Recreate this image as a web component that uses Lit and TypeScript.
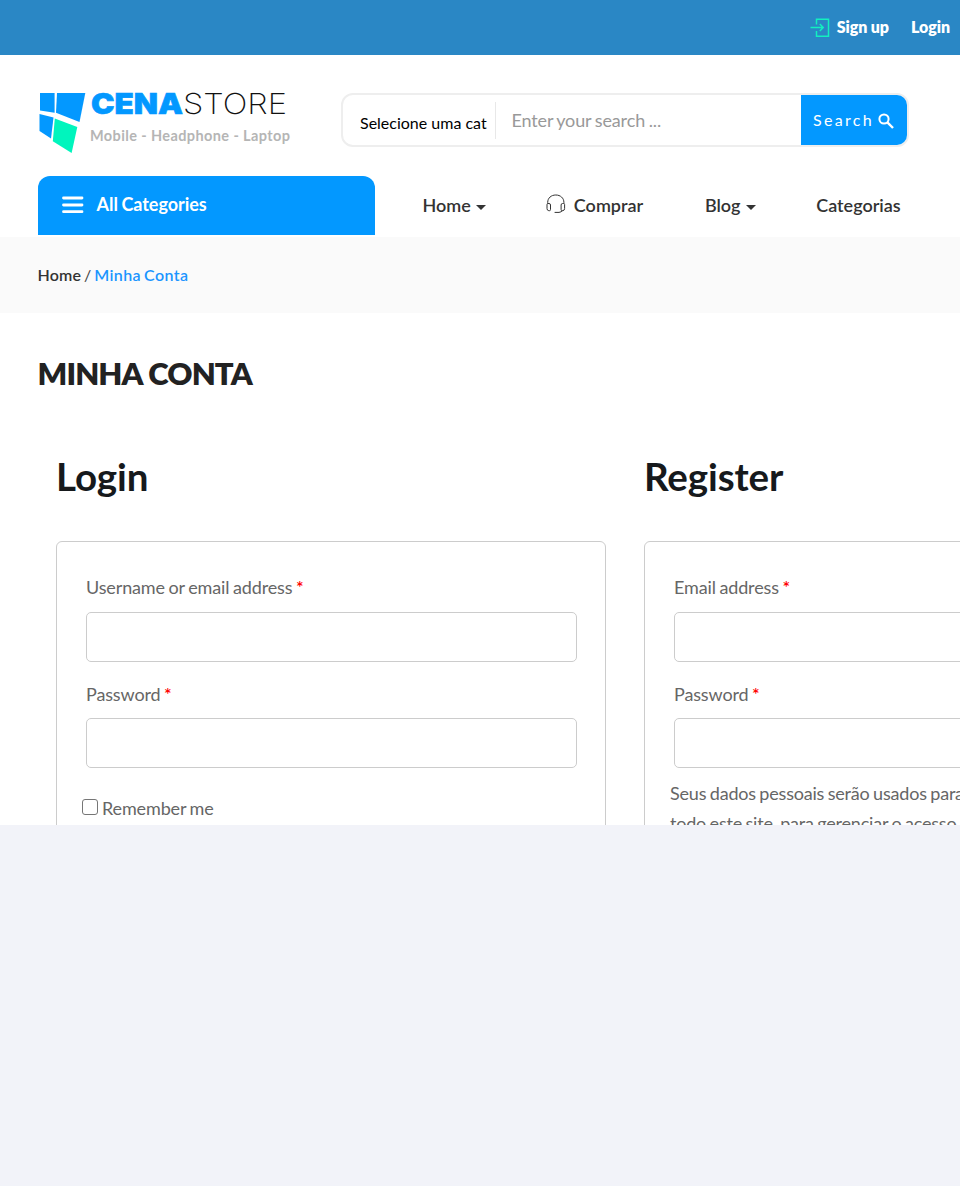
import { LitElement, html, svg, css } from "lit";
import { customElement } from "lit/decorators.js";

const signInIcon = svg`<svg class="icon" width="20" height="20" viewBox="0 0 20 20" fill="none" stroke="#12f0c0" stroke-width="1.5"><path d="M6.5 6.5V1.2H18.5V18.3H6.5V13M.5 9.5H13M9.8 6L13.2 9.5L9.8 13"/></svg>`;
const menuIcon = svg`<svg class="icon" width="22" height="18" viewBox="0 0 22 18" stroke="#fff" stroke-width="2.8" stroke-linecap="round"><path d="M1.5 2H20M1.5 9H20M1.5 15.7H20"/></svg>`;
const searchIcon = svg`<svg class="icon" width="16" height="16" viewBox="0 0 16 16" fill="none" stroke="#fff" stroke-width="2"><circle cx="6" cy="6" r="4.6"/><path d="M9.4 9.4L15 15" stroke-width="2.4"/></svg>`;
const headsetIcon = svg`<svg class="icon headset" width="20" height="20" viewBox="0 0 20 20" fill="none" stroke="#333" stroke-width="1"><path d="M1.7 9.5V8.4C1.7 4 5.2 1 9.8 1s8.1 3 8.1 7.4v1.1"/><path d="M1 10.5Q1 9.5 2 9.5H3Q4.5 9.5 4.5 11V15.5Q4.5 16.7 3.5 16.7H2.8Q1 16.5 1 14.5ZM18.6 10.5Q18.6 9.5 17.6 9.5H16.6Q15.1 9.5 15.1 11V15.5Q15.1 16.7 16.1 16.7H16.8Q18.6 16.5 18.6 14.5Z"/><path d="M16.4 16.7Q15.5 18 13 18.4H8.6" /></svg>`;
const caret = svg`<svg class="caret" width="10" height="5" viewBox="0 0 10 5"><path d="M0 0H10L5 5Z" fill="#333"/></svg>`;

@customElement("app-root")
export class AppRoot extends LitElement {
  static styles = css`
    :host { display: block; height: 1186px; overflow: hidden; background: #f2f3f9; font-family: Lato, sans-serif; color: #666; }
    * { box-sizing: border-box; }
    .icon, .caret { display: block; flex: none; }
    .page { height: 825px; overflow: hidden; background: #fff; }
    .top { height: 55px; background: #2a87c5; display: flex; justify-content: flex-end; align-items: center; padding: 0 10px 2px 0; color: #fff; font-size: 16px; font-weight: 800; letter-spacing: -.05px; word-spacing: -.2px; }
    .top .signup { display: flex; align-items: center; gap: 7px; margin-right: 22px; }
    .top .icon { margin-top: 2px; }
    .head { height: 121px; display: flex; align-items: flex-start; padding: 35px 0 0 38px; }
    .logo { display: block; width: 260px; height: 70px; flex: none; overflow: visible; }
    .search { width: 568px; height: 54px; margin: 3px 0 0 43px; border: 2px solid #eee; border-radius: 12px; display: flex; overflow: hidden; }
    .select { width: 153px; height: 37px; margin-top: 7px; padding-left: 17px; border-right: 1px solid #e8e8e8; line-height: 41px; font-size: 16px; color: #000; white-space: nowrap; overflow: hidden; }
    .query { flex: 1; padding-left: 15.5px; line-height: 51px; font-size: 18px; color: #999; letter-spacing: -.12px; word-spacing: -.9px; }
    .go { width: 106px; background: #0398ff; color: #fff; display: flex; align-items: center; gap: 4px; padding: 0 0 1px 12px; font-size: 16px; letter-spacing: 2.3px; }
    .go .icon { margin-top: 3px; }
    .nav { height: 61px; display: flex; padding-left: 38px; font-size: 18px; font-weight: 600; color: #333; border-bottom: 2px solid #fff; }
    .all { width: 337px; background: #0398ff; color: #fff; border-radius: 12px 12px 0 0; display: flex; align-items: center; gap: 12.5px; padding: 0 0 3px 24px; font-weight: 700; letter-spacing: -.03px; word-spacing: -.8px; }
    .all .icon { margin-top: 2px; }
    .links { display: flex; align-items: center; padding: 0 0 2px 47.5px; gap: 60.2px; }
    .link { display: flex; align-items: center; gap: 5.5px; }
    .link .caret { margin-top: 5px; }
    .link.with-icon { gap: 8px; margin-left: -.7px; margin-right: 1.5px; }
    .headset { margin-bottom: 2px; }
    .crumb { height: 76px; background: #fafafa; padding-left: 37.5px; line-height: 76px; font-size: 16px; font-weight: 600; color: #333; letter-spacing: .15px; word-spacing: -1.3px; }
    .crumb .sep { font-weight: 400; color: #444; }
    .crumb .here { color: #1a95ff; letter-spacing: .4px; }
    h1 { margin: 0; padding: 40px 0 1px 37.5px; font-size: 31px; line-height: 40px; font-weight: 800; color: #222; letter-spacing: -.88px; word-spacing: .4px; }
    .cols { display: grid; grid-template-columns: 550px 550px; gap: 38px; padding: 58px 0 0 56px; }
    h2 { margin: 0 0 41px; font-size: 38.5px; line-height: 48px; font-weight: 700; color: #16191c; letter-spacing: -.1px; }
    .card { height: 420px; border: 1px solid #ccc; border-radius: 6px; padding: 30px 28px 0 29px; font-size: 18px; letter-spacing: -.13px; word-spacing: -.9px; }
    .label { height: 30px; line-height: 30px; }
    .req { color: #ff0000; font-weight: 600; }
    .field { height: 50px; margin: 10px 0 17px; border: 1px solid #ccc; border-radius: 5px; }
    .field.last { margin-bottom: 0; margin-top: 9px; }
    .remember { display: flex; align-items: center; gap: 4px; margin: 25px 0 0 -4px; line-height: 30px; }
    .box { width: 16px; height: 16px; margin-bottom: 3px; border: 1.5px solid #767676; border-radius: 3px; }
    .privacy { margin: 10px -20px 0 -4px; line-height: 30px; white-space: nowrap; letter-spacing: -.2px; }
  `;

  private label(text: string) {
    return html`<div class="label">${text} <span class="req">*</span></div>`;
  }

  render() {
    return html`
      <div class="page">
        <div class="top"><span class="signup">${signInIcon}<span>Sign up</span></span><span>Login</span></div>
        <div class="head">
          <svg class="logo" viewBox="38 90 260 70">
            <path d="M40 93H54.6V112.8L40 110.5Z" fill="#0398ff"/>
            <path d="M57 93H85.3L79.5 122L56 112.8Z" fill="#0398ff"/>
            <path d="M39.5 114L53.5 117.5L51 138.6L39.5 131Z" fill="#0398ff"/>
            <path d="M54.8 118.5L77.3 127L71.6 153L52.8 141.3Z" fill="#00f5bd"/>
            <text x="91" y="114" font-family="Inter" font-weight="900" font-size="29" textLength="92" lengthAdjust="spacingAndGlyphs" fill="#0398ff" stroke="#0398ff" stroke-width=".6">CENA</text>
            <text x="183" y="114" font-family="Inter" font-weight="200" font-size="29" textLength="104" lengthAdjust="spacingAndGlyphs" fill="#111">STORE</text>
            <text x="90" y="141" font-family="Lato" font-weight="700" font-size="14.500" textLength="200" fill="#b5b5b5">Mobile - Headphone - Laptop</text>
          </svg>
          <div class="search">
            <div class="select">Selecione uma cat</div>
            <div class="query">Enter your search ...</div>
            <div class="go">Search${searchIcon}</div>
          </div>
        </div>
        <div class="nav">
          <div class="all">${menuIcon}<span>All Categories</span></div>
          <div class="links">
            <div class="link"><span>Home</span>${caret}</div>
            <div class="link with-icon">${headsetIcon}<span>Comprar</span></div>
            <div class="link"><span>Blog</span>${caret}</div>
            <div class="link"><span>Categorias</span></div>
          </div>
        </div>
        <div class="crumb">Home <span class="sep">/</span> <span class="here">Minha Conta</span></div>
        <h1>MINHA CONTA</h1>
        <div class="cols">
          <div>
            <h2>Login</h2>
            <div class="card">
              ${this.label("Username or email address")}
              <div class="field"></div>
              ${this.label("Password")}
              <div class="field last"></div>
              <div class="remember"><span class="box"></span><span>Remember me</span></div>
            </div>
          </div>
          <div>
            <h2>Register</h2>
            <div class="card">
              ${this.label("Email address")}
              <div class="field"></div>
              ${this.label("Password")}
              <div class="field last"></div>
              <div class="privacy">Seus dados pessoais serão usados para<br>todo este site, para gerenciar o acesso</div>
            </div>
          </div>
        </div>
      </div>
    `;
  }
}
